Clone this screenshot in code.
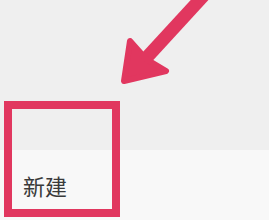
export default function App() {
  return (
    <div
      className="relative w-[269px] h-[220px] overflow-hidden"
      style={{ fontFamily: '"Noto Sans CJK SC", "Noto Sans", sans-serif' }}
    >
      <div className="h-[150px] bg-[#efefef]" />
      <div className="h-[70px] bg-[#f8f8f8] pl-[23px] pt-[24px]">
        <span className="block text-[22px] leading-[22px] text-[#3a3a3a]">新建</span>
      </div>

      {/* annotation box */}
      <div className="absolute left-[4px] top-[101px] w-[116px] h-[116px] border-[8px] border-[#e1375f]" />

      {/* annotation arrow */}
      <svg className="absolute left-0 top-0" width="269" height="220" viewBox="0 0 269 220">
        <line x1="138" y1="67" x2="206" y2="-7" stroke="#e1375f" strokeWidth="13" />
        <polygon
          points="124,81 130,41 146,59 166,71"
          fill="#e1375f"
          stroke="#e1375f"
          strokeWidth="6"
          strokeLinejoin="round"
        />
      </svg>
    </div>
  );
}
